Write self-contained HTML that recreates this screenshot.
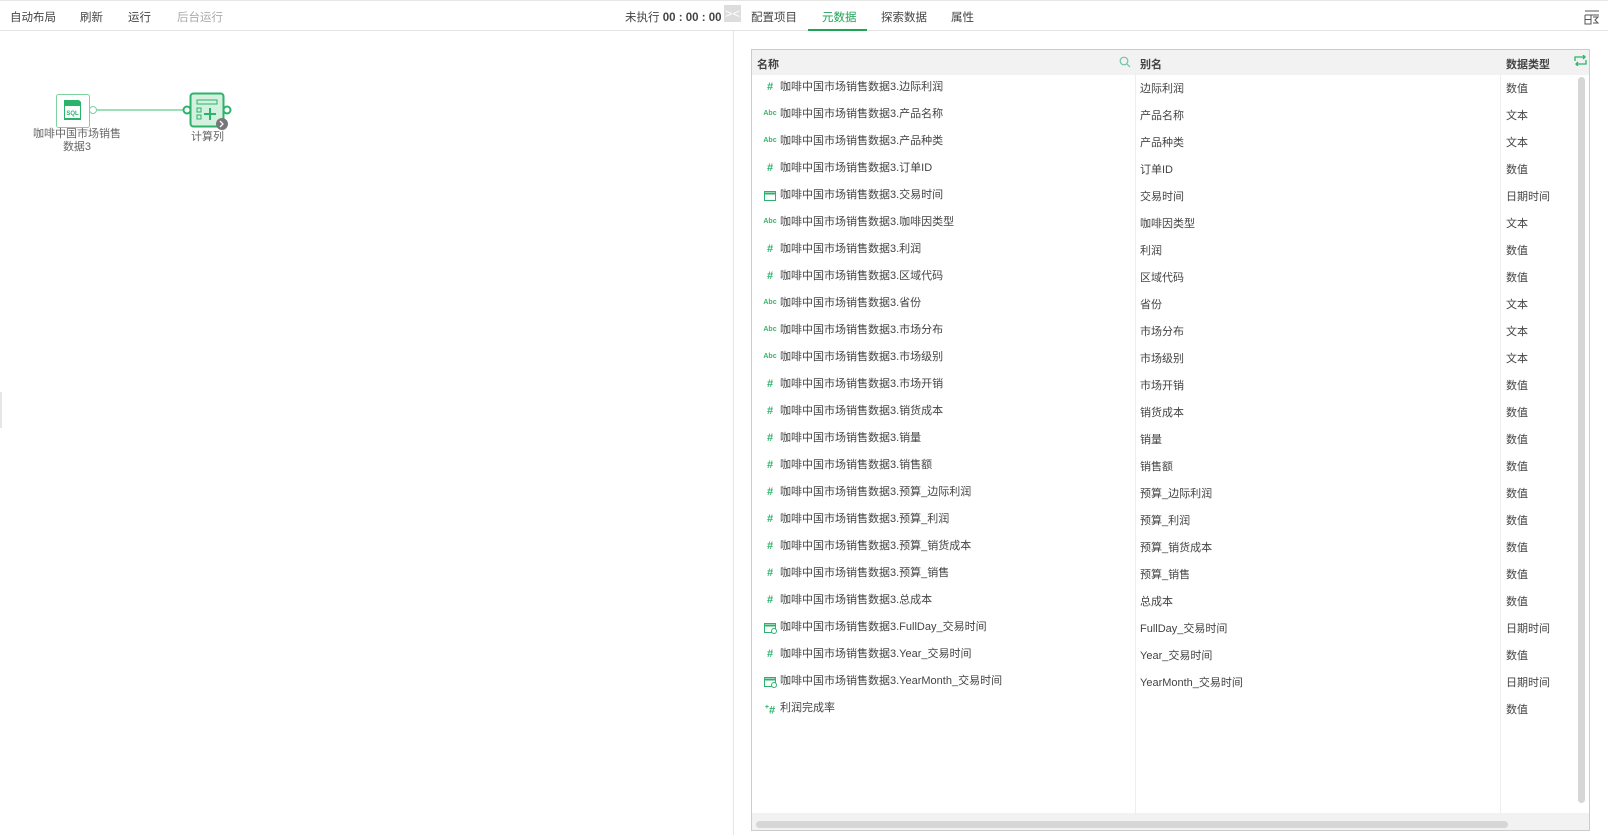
<!DOCTYPE html>
<html><head><meta charset="utf-8"><style>
*{margin:0;padding:0;box-sizing:border-box}
body{width:1608px;height:835px;background:#fff;font-family:"Liberation Sans","Noto Sans CJK SC",sans-serif;font-size:11px;color:#444;position:relative;overflow:hidden}
.a{position:absolute;white-space:nowrap}
.top{position:absolute;left:0;top:0;width:1608px;height:31px;border-top:1px solid #e6e6e6;border-bottom:1px solid #e3e3e3}
.r{position:absolute;height:27px;line-height:27px}
.ic{position:absolute;left:763px;width:14px;text-align:center;color:#2bb36b;font-weight:bold;font-size:11px}
.abc{font-size:7px;color:#3cb56a;font-weight:bold}
</style></head><body>
<div class="top"></div>
<div class="a" style="left:10px;top:9px;font-size:11.5px">自动布局</div>
<div class="a" style="left:80px;top:9px;font-size:11.5px">刷新</div>
<div class="a" style="left:128px;top:9px;font-size:11.5px">运行</div>
<div class="a" style="left:177px;top:9px;color:#aaa;font-size:11.5px">后台运行</div>
<div class="a" style="left:625px;top:9px;font-size:11.5px">未执行 <b>00 : 00 : 00</b></div>
<div class="a" style="left:724px;top:5px;width:17px;height:17px;background:#ddd;color:#fff;font-size:13px;line-height:17px;text-align:center">&gt;&lt;</div>
<div class="a" style="left:733px;top:31px;width:1px;height:804px;background:#e6e6e6"></div>
<div class="a" style="left:0;top:392px;width:2px;height:36px;background:#e6e6e6"></div>
<div class="a" style="left:751px;top:9px;font-size:11.5px">配置项目</div>
<div class="a" style="left:822px;top:9px;color:#1fa355;font-size:11.5px">元数据</div>
<div class="a" style="left:808px;top:29px;width:59px;height:2px;background:#1fa355"></div>
<div class="a" style="left:881px;top:9px;font-size:11.5px">探索数据</div>
<div class="a" style="left:951px;top:9px;font-size:11.5px">属性</div>
<svg class="a" style="left:1584px;top:9px" width="16" height="16" viewBox="0 0 16 16" fill="none" stroke="#555" stroke-width="1"><path d="M1 2h14M1 6h14M1 6v9h6V6M1 10.5h6M9 8h5l-3 3 3 3H9"/></svg>

<svg class="a" style="left:50px;top:88px" width="190" height="45" viewBox="50 88 190 45">
<line x1="96" y1="110" x2="185" y2="110" stroke="#7fd3a0" stroke-width="1.5"/>
<rect x="56.5" y="94.5" width="33" height="33" rx="2" fill="#fff" stroke="#7fd3a0"/>
<path d="M64 100h15l2 2v18H64z" fill="#2bb36b"/>
<rect x="65" y="106" width="15" height="12" fill="#fff"/>
<text x="72.5" y="115" font-size="6" fill="#2bb36b" text-anchor="middle" font-family="Liberation Sans" font-weight="bold">SQL</text>
<circle cx="93" cy="110" r="3.5" fill="#fff" stroke="#7fd3a0"/>
<rect x="190.5" y="93.5" width="33" height="33" rx="3" fill="#d4f0df" stroke="#2bb36b" stroke-width="2"/>
<rect x="197" y="100" width="20" height="4" fill="none" stroke="#2bb36b"/>
<rect x="197" y="108" width="4" height="4" fill="none" stroke="#2bb36b"/>
<rect x="197" y="115" width="4" height="4" fill="none" stroke="#2bb36b"/>
<path d="M204 114h12M210 108v12" stroke="#2bb36b" stroke-width="2"/>
<circle cx="187" cy="110" r="3.5" fill="#fff" stroke="#2bb36b" stroke-width="2"/>
<circle cx="227" cy="110" r="3.5" fill="#fff" stroke="#2bb36b" stroke-width="2"/>
<circle cx="222" cy="124" r="6" fill="#777"/>
<path d="M220 121l3 3-3 3" stroke="#fff" fill="none" stroke-width="1.3"/>
</svg>
<div class="a" style="left:27px;top:128px;width:100px;text-align:center;color:#666;font-size:11px;line-height:13px">咖啡中国市场销售<br>数据3</div>
<div class="a" style="left:187px;top:128px;width:41px;text-align:center;color:#666;font-size:11px">计算列</div>

<div class="a" style="left:751px;top:49px;width:839px;height:782px;border:1px solid #ccc;background:#fff"></div>
<div class="a" style="left:752px;top:50px;width:837px;height:25px;background:#f2f2f2"></div>
<div class="a" style="left:757px;top:56px;font-weight:bold">名称</div>
<svg class="a" style="left:1119px;top:56px" width="12" height="12" viewBox="0 0 12 12" fill="none" stroke="#6cc5a0" stroke-width="1.2"><circle cx="5" cy="5" r="3.8"/><path d="M8 8l3 3"/></svg>
<div class="a" style="left:1140px;top:56px;font-weight:bold">别名</div>
<div class="a" style="left:1506px;top:56px;font-weight:bold">数据类型</div>
<svg class="a" style="left:1574px;top:55px" width="13" height="11" viewBox="0 0 13 11" fill="none" stroke="#2bb36b" stroke-width="1.3"><path d="M1 6V2h10M9 0l2 2-2 2M12 5v4H2M4 11l-2-2 2-2"/></svg>
<div class="a" style="left:1135px;top:75px;width:1px;height:739px;background:#eee"></div>
<div class="a" style="left:1500px;top:75px;width:1px;height:739px;background:#eee"></div>
<div class="a" style="left:1578px;top:77px;width:7px;height:726px;background:#d6d6d6;border-radius:4px"></div>
<div class="a" style="left:752px;top:813px;width:837px;height:17px;background:#f2f2f2"></div>
<div class="a" style="left:756px;top:821px;width:752px;height:7px;background:#d6d6d6;border-radius:4px"></div>

<div id="rows"></div>
<script>
var d=[["#","边际利润","数值"],["A","产品名称","文本"],["A","产品种类","文本"],["#","订单ID","数值"],["C","交易时间","日期时间"],["A","咖啡因类型","文本"],["#","利润","数值"],["#","区域代码","数值"],["A","省份","文本"],["A","市场分布","文本"],["A","市场级别","文本"],["#","市场开销","数值"],["#","销货成本","数值"],["#","销量","数值"],["#","销售额","数值"],["#","预算_边际利润","数值"],["#","预算_利润","数值"],["#","预算_销货成本","数值"],["#","预算_销售","数值"],["#","总成本","数值"],["D","FullDay_交易时间","日期时间"],["#","Year_交易时间","数值"],["D","YearMonth_交易时间","日期时间"],["P","利润完成率","数值"]];
var h="";
d.forEach(function(r,i){var y=74+27*i;var ic;
if(r[0]=="#")ic='<div class="ic" style="top:'+(y+7)+'px;line-height:12px">#</div>';
else if(r[0]=="A")ic='<div class="ic abc" style="top:'+(y+9)+'px;line-height:8px">Abc</div>';
else if(r[0]=="P")ic='<div class="ic" style="top:'+(y+7)+'px;line-height:12px"><sup style="font-size:7px">+</sup>#</div>';
else ic='<svg class="a" style="left:764px;top:'+(y+8)+'px" width="13" height="12" viewBox="0 0 13 12" fill="none" stroke="#2bb36b"><rect x="0.5" y="1.5" width="11" height="9"/><path d="M0.5 3.5h11" stroke-width="2"/>'+(r[0]=="D"?'<circle cx="10" cy="9" r="2.5" fill="#fff"/>':'')+'</svg>';
var nm=r[0]=="P"?r[1]:"咖啡中国市场销售数据3."+r[1];
h+=ic+'<div class="r a" style="left:780px;top:'+y+'px">'+nm+'</div>';
if(r[0]!="P")h+='<div class="r a" style="left:1140px;top:'+(y+2)+'px">'+r[1]+'</div>';
h+='<div class="r a" style="left:1506px;top:'+(y+2)+'px">'+r[2]+'</div>';});
document.getElementById("rows").innerHTML=h;
</script>
</body></html>
